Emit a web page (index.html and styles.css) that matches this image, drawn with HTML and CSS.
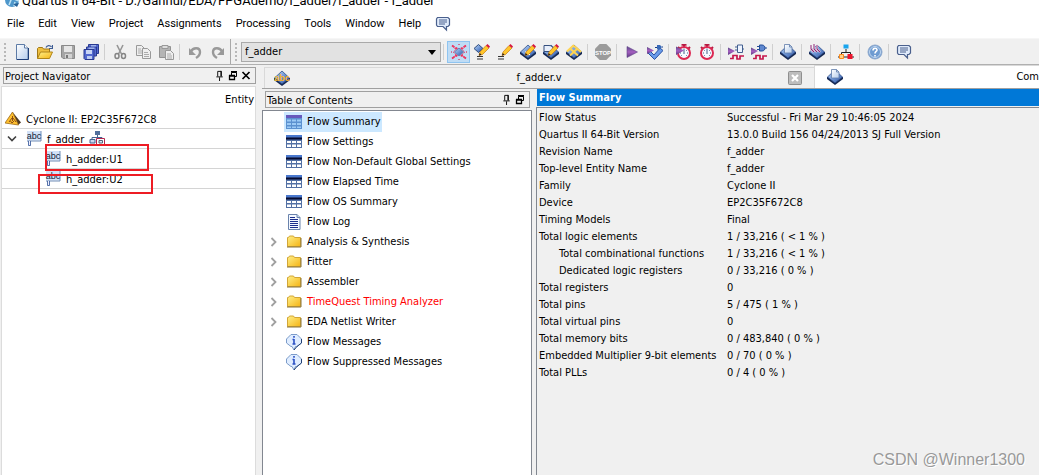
FILE: index.html
```html
<!DOCTYPE html>
<html lang="en">
<head>
<meta charset="utf-8">
<title>Quartus II 64-Bit</title>
<link rel="stylesheet" href="styles.css">
</head>
<body>
<svg class="defs" aria-hidden="true">
  <defs>
    <linearGradient id="blue" x1="0" y1="0" x2="1" y2="1"><stop offset="0" stop-color="#c3d8f4"/><stop offset=".5" stop-color="#6f97d6"/><stop offset="1" stop-color="#2c4f9c"/></linearGradient>
    <linearGradient id="gold" x1="0" y1="0" x2="1" y2="1"><stop offset="0" stop-color="#fff08a"/><stop offset="1" stop-color="#f5b414"/></linearGradient>
    <linearGradient id="page" x1="0" y1="0" x2="1" y2="1"><stop offset="0" stop-color="#fff"/><stop offset="1" stop-color="#b5cdec"/></linearGradient>
    <linearGradient id="purple" x1="0" y1="0" x2="0" y2="1"><stop offset="0" stop-color="#5b4a86"/><stop offset=".5" stop-color="#a55fc0"/><stop offset="1" stop-color="#5a3a80"/></linearGradient>
    <symbol id="i-new" viewBox="0 0 16 16"><path d="M2.500 .5h8l3.500 3.500v11.500h-11.500z" fill="url(#page)" stroke="#5d7ba6"/><path d="M10.500 .5v3.500H14" fill="#fff" stroke="#5d7ba6"/><path d="M14.500 4v11.500H3" fill="none" stroke="#1f3f78"/></symbol>
    <symbol id="i-open" viewBox="0 0 16 16"><path d="M.5 14.500V4.500l1-1h4l1 1.500h6v3" fill="#f0c040" stroke="#a07818"/><path d="M.5 14.500 3.500 8h12l-3 6.500z" fill="url(#gold)" stroke="#b08418"/><path d="M9 3.500c1-2.500 4-2.500 5.500-.5M15.500 1v3.500H12" fill="none" stroke="#3d5c94" stroke-width="1.200"/></symbol>
    <symbol id="i-save" viewBox="0 0 16 16"><path d="M1.500 1.500h13v13h-11.500l-1.500-1.500z" fill="#a5a5a5" stroke="#898989"/><path d="M4 2h8v6H4z" fill="#e6e6e6"/><path d="M5 10h7v4.500H5z" fill="#d2d2d2"/><path d="M6 11h2v3H6z" fill="#777"/></symbol>
    <symbol id="i-saveall" viewBox="0 0 16 16"><g fill="#5268cf" stroke="#283990"><path d="M5.500 .5h10v9h-10z"/><path d="M3.500 3h10v9h-10z"/><path d="M1 5.500h10v10H2L1 14.500z"/></g><path d="M3 6h6v4H3z" fill="#c9d5f5"/><path d="M5.500 3.500h6V5h-6zM8 1h5v1.500H8z" fill="#9fb2ea"/><path d="M4 12h5v3H4z" fill="#bdccf0"/></symbol>
    <symbol id="i-cut" viewBox="0 0 16 16"><path d="M5 1l4.500 9M11 1 6.500 10" stroke="#969696" stroke-width="1.600" fill="none"/><g fill="none" stroke="#858585" stroke-width="1.500"><ellipse cx="5" cy="12" rx="2" ry="2.500"/><ellipse cx="11.500" cy="12" rx="2" ry="2.500"/></g></symbol>
    <symbol id="i-copy" viewBox="0 0 16 16"><g fill="#eee" stroke="#999"><path d="M1.500 1.500h5l3 3v7h-8z"/><path d="M7.500 4.500h5l3 3v7h-8z"/></g><path d="M3 5h3M3 7h4M3 9h4M9 8.500h4M9 10.500h5M9 12.500h5" stroke="#aaa"/></symbol>
    <symbol id="i-paste" viewBox="0 0 16 16"><path d="M1.500 2.500h11v11h-11z" fill="#b4b4b4" stroke="#929292"/><path d="M4 1.500h6v3H4z" fill="#ddd" stroke="#999"/><path d="M7.500 6.500h5l3 3v6h-8z" fill="#eee" stroke="#999"/><path d="M9 10h4M9 12h5M9 14h5" stroke="#aaa"/></symbol>
    <symbol id="i-undo" viewBox="0 0 16 16"><path d="M4 7.500c2-4.500 9-4.500 9 .5 0 3-1.500 4.500-4 6" fill="none" stroke="#999" stroke-width="2.400"/><path d="M2 4v7h7z" fill="#999"/></symbol>
    <symbol id="i-redo" viewBox="0 0 16 16"><path d="M12 7.500c-2-4.500-9-4.500-9 .5 0 3 1.500 4.500 4 6" fill="none" stroke="#999" stroke-width="2.400"/><path d="M14 4v7H7z" fill="#999"/></symbol>
    <symbol id="i-burst" viewBox="0 0 16 16"><path d="M1 1.500 6 5M15 1.500 10 5M1 14.500 6 11M15 14.500 10 11" stroke="#ee2f5a" stroke-width="1.800" stroke-dasharray="3 1"/><path d="M2 1.500 5 6 2 8l3 2-3 4.500M14 1.500 11 6l3 2-3 2 3 4.500M5 3.500 8 5l3-1.500M5 12.500 8 11l3 1.500" fill="none" stroke="#f0406a" stroke-dasharray="2 1"/><path d="M8 0v1M8 15v1M0 8h1M15 8h1" stroke="#e00030"/><path d="M8 4l4.500 4L8 12 3.500 8z" fill="url(#blue)" stroke="#6584b5"/></symbol>
    <symbol id="pencil" viewBox="0 0 16 16"><path d="M5 11.500l1-3.500 6-6.500L15 4l-6.500 6.500z" fill="#ffc62b" stroke="#c77a10" stroke-width=".7"/><path d="M12 1.500L13.500 0 16 2.500 15 4z" fill="#d71640"/><path d="M5 11.500l.7-2.500L7.500 10.700z" fill="#2b211a"/></symbol>
    <symbol id="chip" viewBox="0 0 16 16"><path d="M0 8h16v2l-8 6-8-6z" fill="#14264f"/><path d="M.5 8 8 1l7.500 7L8 14z" fill="url(#blue)" stroke="#2f4f8c" stroke-width=".8"/></symbol>
    <symbol id="i-assign" viewBox="0 0 16 16"><path d="M4.500 .5 9 4.500l-4.500 4-4.500-4z" fill="url(#blue)" stroke="#304d7d"/><path d="M3 12.500h6M3 15h6" stroke="#333"/><use href="#pencil"/></symbol>
    <symbol id="i-edit" viewBox="0 0 16 16"><path d="M1 12.500h6M1 15h6" stroke="#333"/><use href="#pencil"/></symbol>
    <symbol id="i-pin" viewBox="0 0 16 16"><use href="#chip"/><path d="M5 8h5M5 10.500h5" stroke="#fff"/><use href="#pencil"/></symbol>
    <symbol id="i-gate" viewBox="0 0 16 16"><use href="#chip"/><path d="M1 1.500h5c5 0 5 6 0 6H1z" fill="#e8effb" stroke="#344f7e"/><use href="#pencil"/></symbol>
    <symbol id="i-plan" viewBox="0 0 16 16"><use href="#chip"/><path d="M4 4.500l8 7M8 2l7 6M12 4l-8 7.500M8 1 1 7.500" stroke="#ffd451" stroke-width="2"/></symbol>
    <symbol id="i-stop" viewBox="0 0 16 16"><path d="M4.700 0h6.600L16 4.700v6.600L11.300 16H4.700L0 11.300V4.700z" fill="#9b9b9b"/><text x="8" y="10.500" class="stop-text">STOP</text></symbol>
    <symbol id="i-play" viewBox="0 0 16 16"><path d="M3 2.500 13.500 8 3 13.500z" fill="url(#purple)" stroke="#63458b" stroke-width=".6"/></symbol>
    <symbol id="i-synth" viewBox="0 0 16 16"><path d="M0 8l3-1 4 4 6-7 3 2.500-8.500 9z" fill="#6a9bea" stroke="#2850a2"/><path d="M0 3l7 3.500L0 10z" fill="url(#purple)"/><path d="M8 3.500h3M15 3h1" stroke="#173c84"/><path d="M10 1h3l2 2-2 2.500h-3z" fill="#3869b7"/></symbol>
    <symbol id="i-clock" viewBox="0 0 16 16"><path d="M5.500 .8h5M8 1v2M2 3l1.500 1.500M14 3l-1.500 1.500" stroke="#b81a42" stroke-width="2"/><circle cx="8" cy="9" r="6" fill="#f6faff" stroke="#dc2852" stroke-width="2"/><path d="M8 4.500V10M4 9h1M11 9h1M5 6l.7.7M11 6l-.7.7M5 12l.7-.7M11 12l-.7-.7" stroke="#45618d"/></symbol>
    <symbol id="i-clockrun" viewBox="0 0 16 16"><use href="#i-clock"/><path d="M0 2.500 8 6.500 0 11z" fill="url(#purple)"/></symbol>
    <symbol id="wave" viewBox="0 0 16 16"><path d="M2 14.500h3v-3h4v3.500h3v-3h4" fill="none" stroke="#c5164b" stroke-width="1.700"/><path d="M0 3.500 7 7l-7 4z" fill="url(#purple)"/></symbol>
    <symbol id="i-rtl" viewBox="0 0 16 16"><use href="#wave"/><path d="M9.500 1h5v7.500h-5zM7 3h2.500M7 6h2.500M14.500 5H16" fill="#eef4ff" stroke="#425f8f"/></symbol>
    <symbol id="i-gatesim" viewBox="0 0 16 16"><use href="#wave"/><path d="M8.500 1H11c4 0 4 6 0 6H8.500zM6 2.500h3M6 5.500h3M14 4h2" fill="#5f88cf" stroke="#234c98"/></symbol>
    <symbol id="i-report" viewBox="0 0 16 16"><use href="#chip"/><path d="M4.500 .5h5l2.500 2.500v6h-7.500z" fill="url(#page)" stroke="#607caa" stroke-width=".8"/><path d="M9.500 .5v2.500H12" fill="none" stroke="#607caa" stroke-width=".8"/></symbol>
    <symbol id="i-prog" viewBox="0 0 16 16"><use href="#chip"/><path d="M2 1v4l3 3M5 0v5l3 3M8 1v4l3 3" fill="none" stroke="#fff" stroke-width="2.200"/><path d="M2 1v4l3 3M5 0v5l3 3M8 1v4l3 3" fill="none" stroke="#8c2a78" stroke-width="1.100"/></symbol>
    <symbol id="i-tree" viewBox="0 0 16 16"><path d="M8 5v4M3.500 11V8.500h9V11M0 13h16" fill="none" stroke="#222"/><path d="M5.500 .5h5v4h-5z" fill="#19a5ee"/><path d="M1.500 10.500h4v4h-4z" fill="#ffd089" stroke="#ff8a18"/><path d="M9.500 10h5v5h-5z" fill="#ee152d"/></symbol>
    <symbol id="i-help" viewBox="0 0 16 16"><circle cx="8" cy="8" r="7" fill="#6e9bd1" stroke="#8fa9cc"/><circle cx="8" cy="8" r="5.500" fill="none" stroke="#d5e4f5" stroke-width=".8"/><path d="M6 6.500c0-3 4-3 4-.5 0 1.500-2 1.500-2 3.500M8 11v1.500" fill="none" stroke="#fff" stroke-width="1.600"/></symbol>
    <symbol id="i-chat" viewBox="0 0 16 16"><path d="M2.500 1.500h10.500l1.500 1.500v6L13 10.500h-1.500V14L8 10.500H2.500L1.500 9V3z" fill="#dfeafa" stroke="#4a608d" stroke-width="1.200"/><path d="M4 4h8M4 6h8M4 8h6" stroke="#4a608d"/></symbol>
    <symbol id="i-abcchip" viewBox="0 0 16 16"><use href="#chip"/><text x="8" y="11" class="chip-text">abc</text></symbol>
    <symbol id="i-abc" viewBox="0 0 16 16"><path d="M1 0h14v9.500H5V15H2.500V9.500H1z" fill="#d2e1f7"/><path d="M1 10h14V0" fill="none" stroke="#738eb6"/><path d="M2.500 10v4.500h2V10" fill="#eef" stroke="#315394" stroke-width=".8"/><text x="8" y="8" class="abc-text">abc</text></symbol>
    <symbol id="i-warn" viewBox="0 0 16 16"><path d="M7.500 1 16 11.500 13 14z" fill="#4d3a25"/><path d="M7.500 1 0 12l13.500 2z" fill="#ffc12e" stroke="#9c6a18" stroke-width=".8"/><path d="M7.500 5v5M7 7l-3 4M8 7l3 4M5.500 10l1.500 2 2-2" fill="none" stroke="#7e3f11" stroke-width=".9"/></symbol>
    <symbol id="i-hier" viewBox="0 0 16 16"><path d="M6 1.500h5M8.500 4v3M3 9V6.500h10V8" stroke="#456391" fill="none"/><path d="M6 0h5v4H6z" fill="#516f9c"/><path d="M1 8.500h5v3.500H1z" fill="#c9daf2" stroke="#456391"/><path d="M7.500 7.500h8v6h-8z" fill="#fff" stroke="#b3264e"/><path d="M10 9.500h3.500v2.500H10z" fill="#d8e4f4" stroke="#567"/></symbol>
    <symbol id="i-table" viewBox="0 0 16 16"><path d="M0 1h16v13H0z" fill="#5270a4"/><path d="M0 1h16v2.500H0z" fill="#4a78ce"/><path d="M0 3.500h16v2H0z" fill="#050b32"/><path d="M1 7h4v2H1zM6 7h4v2H6zM11 7h4v2h-4zM1 10.500h4V13H1zM6 10.500h4V13H6zM11 10.500h4V13h-4z" fill="#fff"/></symbol>
    <symbol id="i-tablesel" viewBox="0 0 16 16"><path d="M0 1h16v14H0z" fill="#5b91d0"/><path d="M0 1h16v3H0z" fill="#6659bd"/><path d="M1 5.500h4v2H1zM6 5.500h4v2H6zM11 5.500h4v2h-4zM1 9h4v2H1zM6 9h4v2H6zM11 9h4v2h-4zM1 12.500h4V14H1zM6 12.500h4V14H6zM11 12.500h4V14h-4z" fill="#9ccaf5"/></symbol>
    <symbol id="i-log" viewBox="0 0 16 16"><path d="M2.500 .5h8.500l3 3v12H2.500z" fill="#f4f8ff" stroke="#6a83ac"/><path d="M11 .5v3h3" fill="#c6d8ee" stroke="#6a83ac"/><path d="M4 3.500h5M4 5.500h8M4 7.500h8M4 9.500h8M4 11.500h8M4 13.500h8" stroke="#1b2e8c"/></symbol>
    <symbol id="i-folder" viewBox="0 0 16 16"><path d="M1.500 12.500V3.500h1l1-1.500h4l1 1.500h6v9z" fill="url(#gold)" stroke="#d2a637"/><path d="M1 13h14V4" fill="none" stroke="#8a7438"/></symbol>
    <symbol id="i-info" viewBox="0 0 16 16"><path d="M5 .5h6L15.500 5v4L11 12.500H9.500L8 16l-2-3.500H5L.5 9V5z" fill="#e0edff" stroke="#7c9cc9"/><path d="M15.500 5v4L11 12.500 8 16" fill="none" stroke="#234174"/><path d="M8 2v1.700M8 5v5M6.500 10h3M6.500 5.500H8" stroke="#2a4fc4" stroke-width="1.600"/></symbol>
    <symbol id="i-dock" viewBox="0 0 10 12"><path d="M2.500 7V1.500h4V7M1 7.500h7M4.500 8v4" fill="none" stroke="#000"/><path d="M6 1v6" stroke="#000"/></symbol>
    <symbol id="i-float" viewBox="0 0 10 10"><path d="M3.500 5V2h5v4H6.500M3 1.500h6" fill="none" stroke="#000"/><path d="M3 1h6" stroke="#000"/><path d="M1.500 5.500h5v3.500h-5zM1 5h6" fill="none" stroke="#000" stroke-width="1.300"/></symbol>
    <symbol id="i-close" viewBox="0 0 10 10"><path d="M1.500 1.500l7 7M8.500 1.500l-7 7" stroke="#000" stroke-width="1.700"/></symbol>
    <symbol id="i-closetab" viewBox="0 0 14 14"><rect x=".5" y=".5" width="13" height="13" rx="1" fill="#bdbdbd" stroke="#8f8f8f"/><path d="M4 4l6 6M10 4l-6 6" stroke="#fff" stroke-width="2.200"/></symbol>
    <symbol id="i-right" viewBox="0 0 8 10"><path d="M1.500 1l4 4-4 4" fill="none" stroke="#a0a0a0" stroke-width="1.800"/></symbol>
    <symbol id="i-down" viewBox="0 0 10 8"><path d="M1 1.500l4 4 4-4" fill="none" stroke="#404040" stroke-width="1.600"/></symbol>
    <symbol id="i-globe" viewBox="0 0 16 16"><circle cx="8" cy="8" r="7" fill="#4e97cb"/><path d="M3 5l4 3-2 5M8 1l2 6 5 2M10 14l1-4" stroke="#bfe3f5" stroke-width="1.500" fill="none"/><path d="M9 12l6-1-2 4z" fill="#266199"/></symbol>
  </defs>
</svg>
<div class="app">
  <header class="titlebar"><svg class="icon"><use href="#i-globe"/></svg><span>Quartus II 64-Bit - D:/Gannui/EDA/FPGAdemo/f_adder/f_adder - f_adder</span></header>
  <nav class="menubar">
    <button>File</button><button>Edit</button><button>View</button><button>Project</button><button>Assignments</button><button>Processing</button><button>Tools</button><button>Window</button><button>Help</button><button aria-label="Feedback"><svg class="icon"><use href="#i-chat"/></svg></button>
  </nav>
  <div class="toolbar">
    <span class="grip"></span>
    <button class="tool" aria-label="New"><svg class="icon"><use href="#i-new"/></svg></button>
    <button class="tool" aria-label="Open"><svg class="icon"><use href="#i-open"/></svg></button>
    <button class="tool" aria-label="Save"><svg class="icon"><use href="#i-save"/></svg></button>
    <button class="tool" aria-label="Save all"><svg class="icon"><use href="#i-saveall"/></svg></button>
    <span class="sep"></span>
    <button class="tool" aria-label="Cut"><svg class="icon"><use href="#i-cut"/></svg></button>
    <button class="tool" aria-label="Copy"><svg class="icon"><use href="#i-copy"/></svg></button>
    <button class="tool" aria-label="Paste"><svg class="icon"><use href="#i-paste"/></svg></button>
    <span class="sep"></span>
    <button class="tool" aria-label="Undo"><svg class="icon"><use href="#i-undo"/></svg></button>
    <button class="tool" aria-label="Redo"><svg class="icon"><use href="#i-redo"/></svg></button>
    <span class="bar-end"></span>
    <span class="grip"></span>
    <span class="combo"><select aria-label="Project"><option>f_adder</option></select><svg viewBox="0 0 8 5"><path d="M0 0h8L4 5z"/></svg></span>
    <span class="sep"></span>
    <button class="tool active" aria-label="Settings"><svg class="icon"><use href="#i-burst"/></svg></button>
    <button class="tool" aria-label="Assignment editor"><svg class="icon"><use href="#i-assign"/></svg></button>
    <button class="tool" aria-label="Edit"><svg class="icon"><use href="#i-edit"/></svg></button>
    <button class="tool" aria-label="Pin planner"><svg class="icon"><use href="#i-pin"/></svg></button>
    <button class="tool" aria-label="Gate editor"><svg class="icon"><use href="#i-gate"/></svg></button>
    <button class="tool" aria-label="Chip planner"><svg class="icon"><use href="#i-plan"/></svg></button>
    <span class="sep"></span>
    <button class="tool" aria-label="Stop"><svg class="icon"><use href="#i-stop"/></svg></button>
    <span class="sep"></span>
    <button class="tool" aria-label="Start compilation"><svg class="icon"><use href="#i-play"/></svg></button>
    <button class="tool" aria-label="Start synthesis"><svg class="icon"><use href="#i-synth"/></svg></button>
    <span class="sep"></span>
    <button class="tool" aria-label="Start timing analysis"><svg class="icon"><use href="#i-clockrun"/></svg></button>
    <button class="tool" aria-label="Timing analyzer"><svg class="icon"><use href="#i-clock"/></svg></button>
    <span class="sep"></span>
    <button class="tool" aria-label="RTL simulation"><svg class="icon"><use href="#i-rtl"/></svg></button>
    <button class="tool" aria-label="Gate simulation"><svg class="icon"><use href="#i-gatesim"/></svg></button>
    <span class="sep"></span>
    <button class="tool" aria-label="Compilation report"><svg class="icon"><use href="#i-report"/></svg></button>
    <span class="sep"></span>
    <button class="tool" aria-label="Programmer"><svg class="icon"><use href="#i-prog"/></svg></button>
    <span class="sep"></span>
    <button class="tool" aria-label="Qsys"><svg class="icon"><use href="#i-tree"/></svg></button>
    <span class="sep"></span>
    <button class="tool" aria-label="Help"><svg class="icon"><use href="#i-help"/></svg></button>
    <span class="sep"></span>
    <button class="tool" aria-label="Feedback"><svg class="icon"><use href="#i-chat"/></svg></button>
  </div>
  <main class="workspace">
    <aside class="navigator">
      <div class="dock-title"><span>Project Navigator</span>
        <button aria-label="Pin"><svg><use href="#i-dock"/></svg></button><button aria-label="Float"><svg><use href="#i-float"/></svg></button><button aria-label="Close"><svg><use href="#i-close"/></svg></button>
      </div>
      <div class="nav-body">
        <div class="nav-head">Entity</div>
        <ul class="entities">
          <li class="device"><svg class="icon"><use href="#i-warn"/></svg><span>Cyclone II: EP2C35F672C8</span></li>
          <li class="top"><svg class="chev"><use href="#i-down"/></svg><svg class="icon"><use href="#i-abc"/></svg><span>f_adder</span><svg class="icon"><use href="#i-hier"/></svg></li>
          <li class="child"><svg class="icon"><use href="#i-abc"/></svg><span>h_adder:U1</span><i class="mark mark-first"></i></li>
          <li class="child"><svg class="icon"><use href="#i-abc"/></svg><span>h_adder:U2</span><i class="mark mark-second"></i></li>
        </ul>
      </div>
    </aside>
    <section class="editor">
      <div class="tabs">
        <div class="tab"><svg class="icon"><use href="#i-abcchip"/></svg><button class="tab-name">f_adder.v</button><button class="tab-close" aria-label="Close tab"><svg><use href="#i-closetab"/></svg></button></div>
        <div class="tab current"><svg class="icon"><use href="#i-report"/></svg><button class="tab-name">Com</button></div>
      </div>
      <div class="panes">
        <section class="contents">
          <div class="dock-title"><span>Table of Contents</span>
            <button aria-label="Pin"><svg><use href="#i-dock"/></svg></button><button aria-label="Float"><svg><use href="#i-float"/></svg></button>
          </div>
          <ul class="toc">
            <li><span class="exp"></span><span class="entry selected"><svg class="icon"><use href="#i-tablesel"/></svg>Flow Summary</span></li>
            <li><span class="exp"></span><span class="entry"><svg class="icon"><use href="#i-table"/></svg>Flow Settings</span></li>
            <li><span class="exp"></span><span class="entry"><svg class="icon"><use href="#i-table"/></svg>Flow Non-Default Global Settings</span></li>
            <li><span class="exp"></span><span class="entry"><svg class="icon"><use href="#i-table"/></svg>Flow Elapsed Time</span></li>
            <li><span class="exp"></span><span class="entry"><svg class="icon"><use href="#i-table"/></svg>Flow OS Summary</span></li>
            <li><span class="exp"></span><span class="entry"><svg class="icon"><use href="#i-log"/></svg>Flow Log</span></li>
            <li><span class="exp"><svg><use href="#i-right"/></svg></span><span class="entry"><svg class="icon"><use href="#i-folder"/></svg>Analysis &amp; Synthesis</span></li>
            <li><span class="exp"><svg><use href="#i-right"/></svg></span><span class="entry"><svg class="icon"><use href="#i-folder"/></svg>Fitter</span></li>
            <li><span class="exp"><svg><use href="#i-right"/></svg></span><span class="entry"><svg class="icon"><use href="#i-folder"/></svg>Assembler</span></li>
            <li><span class="exp"><svg><use href="#i-right"/></svg></span><span class="entry alert"><svg class="icon"><use href="#i-folder"/></svg>TimeQuest Timing Analyzer</span></li>
            <li><span class="exp"><svg><use href="#i-right"/></svg></span><span class="entry"><svg class="icon"><use href="#i-folder"/></svg>EDA Netlist Writer</span></li>
            <li><span class="exp"></span><span class="entry"><svg class="icon"><use href="#i-info"/></svg>Flow Messages</span></li>
            <li><span class="exp"></span><span class="entry"><svg class="icon"><use href="#i-info"/></svg>Flow Suppressed Messages</span></li>
          </ul>
        </section>
        <section class="report">
          <h1>Flow Summary</h1>
          <div class="report-body">
            <table>
              <tr><th>Flow Status</th><td>Successful - Fri Mar 29 10:46:05 2024</td></tr>
              <tr><th>Quartus II 64-Bit Version</th><td>13.0.0 Build 156 04/24/2013 SJ Full Version</td></tr>
              <tr><th>Revision Name</th><td>f_adder</td></tr>
              <tr><th>Top-level Entity Name</th><td>f_adder</td></tr>
              <tr><th>Family</th><td>Cyclone II</td></tr>
              <tr><th>Device</th><td>EP2C35F672C8</td></tr>
              <tr><th>Timing Models</th><td>Final</td></tr>
              <tr><th>Total logic elements</th><td>1 / 33,216 ( &lt; 1 % )</td></tr>
              <tr><th class="sub">Total combinational functions</th><td>1 / 33,216 ( &lt; 1 % )</td></tr>
              <tr><th class="sub">Dedicated logic registers</th><td>0 / 33,216 ( 0 % )</td></tr>
              <tr><th>Total registers</th><td>0</td></tr>
              <tr><th>Total pins</th><td>5 / 475 ( 1 % )</td></tr>
              <tr><th>Total virtual pins</th><td>0</td></tr>
              <tr><th>Total memory bits</th><td>0 / 483,840 ( 0 % )</td></tr>
              <tr><th>Embedded Multiplier 9-bit elements</th><td>0 / 70 ( 0 % )</td></tr>
              <tr><th>Total PLLs</th><td>0 / 4 ( 0 % )</td></tr>
            </table>
          </div>
        </section>
      </div>
    </section>
  </main>
  <div class="watermark">CSDN @Winner1300</div>
</div>
</body>
</html>
```
FILE: styles.css
```css
* { box-sizing: border-box; }
body { margin: 0; background: #f0f0f0; color: #000; font: 11px/16px "DejaVu Sans Condensed", "Noto Sans", sans-serif; }
button, select { font: inherit; color: inherit; border: 0; background: none; padding: 0; margin: 0; }
ul { list-style: none; margin: 0; padding: 0; }
svg { display: block; flex: none; }
.defs { position: absolute; width: 0; height: 0; }
.icon { width: 16px; height: 16px; }
.stop-text { font: bold 6px "Liberation Sans", sans-serif; fill: #fff; text-anchor: middle; }
.chip-text { font: bold 9px "Liberation Sans", sans-serif; fill: #ffb51f; text-anchor: middle; }
.abc-text { font: 9px "Liberation Sans", sans-serif; fill: #123; text-anchor: middle; }

.app { position: relative; display: flex; flex-direction: column; height: 100vh; overflow: hidden; }
.titlebar { display: flex; align-items: flex-end; gap: 2px; height: 10px; padding-left: 4px; overflow: hidden; background: #fff; font: 13px/18px Roboto, sans-serif; white-space: nowrap; flex: none; }
.titlebar .icon { margin-bottom: 2px; }
.menubar { display: flex; align-items: center; gap: 14px; height: 28px; padding: 0 7px; background: #fff; font-family: Roboto, sans-serif; flex: none; }

.toolbar { display: flex; align-items: center; height: 27px; padding-left: 4px; border-top: 1px solid #f6f6f6; border-bottom: 1px solid #b0b0b0; flex: none; }
.grip { width: 2px; height: 18px; margin-right: 4px; background: repeating-linear-gradient(#b8b8b8 0 2px, transparent 2px 4px); }
.tool { display: grid; place-items: center; width: 23px; height: 22px; flex: none; }
.tool.active { background: #bfdcf5; border: 1px solid #8fc4f0; }
.sep { width: 1px; height: 16px; margin: 0 3px 0 2px; background: #cfcfcf; flex: none; }
.bar-end { width: 1px; height: 25px; margin: 0 4px 0 1px; background: #a8a8a8; }
.combo { position: relative; width: 200px; height: 20px; }
.combo select { appearance: none; width: 100%; height: 100%; padding: 0 3px; background: #e2e2e2; border: 1px solid #a9a9a9; border-radius: 0; font-size: 11px; }
.combo svg { position: absolute; right: 5px; top: 8px; width: 8px; height: 5px; pointer-events: none; }

.workspace { display: flex; flex: 1; min-height: 0; }
.navigator { display: flex; flex-direction: column; width: 256px; padding: 2px 0 0 1px; flex: none; }
.dock-title { display: flex; align-items: center; gap: 3px; height: 17px; padding: 0 4px 0 1px; border: 1px solid #a0a0a0; }
.dock-title span { flex: 1; padding-top: 2px; }
.dock-title svg { width: 10px; height: 11px; }
.navigator .dock-title { margin: 0 0 2px 2px; }
.nav-body { flex: 1; background: #fff; border: 1px solid #dcdcdc; border-bottom: 0; }
.nav-head { height: 22px; padding: 5px 1px 0 0; text-align: right; }
.entities li { position: relative; display: flex; align-items: center; height: 20px; border-bottom: 1px solid #d4d4d4; }
.entities span { padding-top: 2px; }
.device { padding-left: 3px; gap: 5px; }
.top { padding-left: 5px; gap: 5px; }
.top .chev { width: 10px; height: 8px; margin-right: 4px; }
.child { padding-left: 43px; gap: 5px; }
.mark { position: absolute; border: 2px solid #ed1c24; pointer-events: none; }
.mark-first { left: 43px; top: -5px; width: 104px; height: 27px; }
.mark-second { left: 36px; top: 5px; width: 115px; height: 20px; }

.editor { display: flex; flex-direction: column; flex: 1; min-width: 0; padding-left: 6px; }
.tabs { display: flex; height: 24px; padding-left: 2px; border-bottom: 1px solid #a0a0a0; flex: none; }
.tab { display: flex; align-items: center; flex: 0 0 71%; margin-top: 2px; padding: 0 12px 0 9px; border-top: 1px solid #d9d9d9; border-left: 1px solid #d9d9d9; }
.tab-name { flex: 1; }
.tab-close svg { width: 14px; height: 14px; }
.tab.current { flex: 1; margin-top: 0; padding: 0 0 0 12px; background: #fff; }
.current .tab-name { text-align: right; }
.panes { display: flex; flex: 1; min-height: 0; }
.contents { display: flex; flex-direction: column; width: 270px; padding-top: 2px; flex: none; }
.contents .dock-title { margin: 0 2px 2px 3px; }
.toc { flex: 1; padding-top: 1px; background: #fff; border: 1px solid #828790; border-bottom: 0; }
.toc li { display: flex; height: 20px; }
.exp { display: grid; place-items: center; width: 21px; }
.exp svg { width: 8px; height: 10px; }
.entry { display: flex; align-items: center; gap: 5px; padding: 0 1px 0 2px; }
.selected { background: #cce8ff; }
.alert { color: #f00; }
.report { display: flex; flex-direction: column; flex: 1; min-width: 0; margin-left: 4px; }
.report h1 { margin: 0 0 1px 1px; padding-left: 2px; background: #0078d7; color: #fff; font: bold 11px/17px "DejaVu Sans Condensed", sans-serif; }
.report-body { flex: 1; padding-top: 1px; border-top: 1px solid #828790; border-left: 1px solid #828790; }
.report table { border-collapse: collapse; width: 100%; }
.report th, .report td { padding: 0 2px; height: 17px; line-height: 17px; font-weight: normal; text-align: left; }
.report th { width: 188px; white-space: nowrap; }
.report .sub { padding-left: 22px; }
.watermark { position: absolute; right: 14px; bottom: 5px; font: 16px/20px "Liberation Sans", sans-serif; color: #999; text-shadow: 1px 1px 0 #fff; }
```
